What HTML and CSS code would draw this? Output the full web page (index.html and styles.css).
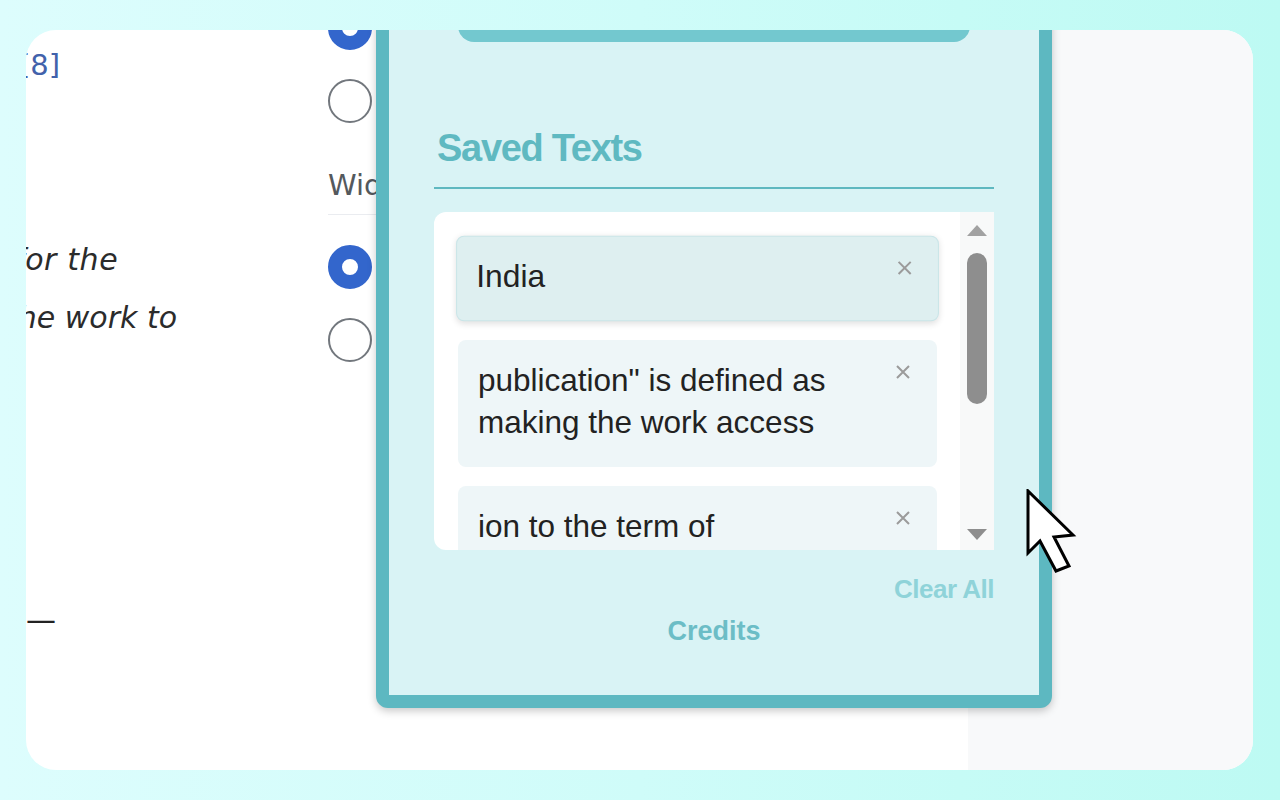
FILE: index.html
```html
<!DOCTYPE html>
<html lang="en">
<head>
<meta charset="utf-8">
<title>Saved Texts</title>
<link rel="stylesheet" href="styles.css">
</head>
<body>
<div class="stage">
  <div class="card">
    <div class="main">
      <div class="text-col">
        <div class="cite">[8]</div>
        <p class="quote"><span class="l1">for the</span><span class="l2">the work to</span></p>
        <div class="dash">—</div>
      </div>
      <div class="radio-col">
        <span class="radio on r1"></span>
        <span class="radio r2"></span>
        <div class="label">Width</div>
        <span class="radio on r3"></span>
        <span class="radio r4"></span>
      </div>
    </div>
    <div class="aside"></div>

    <div class="popup">
      <div class="top-btn"></div>
      <h2 class="title">Saved Texts</h2>
      <div class="list">
        <div class="items">
          <div class="item hover">
            <span class="txt">India</span>
            <svg class="x" viewBox="0 0 16 16" width="16" height="16"><path d="M2 2 L14 14 M14 2 L2 14" /></svg>
          </div>
          <div class="item">
            <span class="txt">publication" is defined as making the work access</span>
            <svg class="x" viewBox="0 0 16 16" width="16" height="16"><path d="M2 2 L14 14 M14 2 L2 14" /></svg>
          </div>
          <div class="item">
            <span class="txt">ion to the term of</span>
            <svg class="x" viewBox="0 0 16 16" width="16" height="16"><path d="M2 2 L14 14 M14 2 L2 14" /></svg>
          </div>
        </div>
        <div class="scroll">
          <span class="up"></span>
          <span class="thumb"></span>
          <span class="down"></span>
        </div>
      </div>
      <div class="clear">Clear All</div>
      <div class="credits">Credits</div>
    </div>
  </div>
</div>
<svg class="cursor" width="52" height="86" viewBox="0 0 52 86">
  <path d="M2 2 L2 64 L14 52 L30 82 L43 77 L28 48 L47 46 Z" />
</svg>
</body>
</html>
```

FILE: styles.css
```css
html, body {
  margin: 0;
  padding: 0;
}
body {
  width: 1280px;
  height: 800px;
  overflow: hidden;
  position: relative;
  background: linear-gradient(90deg, #ddfdfd 0%, #cffcf9 50%, #bdfaf3 100%);
  font-family: "Liberation Sans", Arial, sans-serif;
}
.stage {
  padding: 30px 27px 30px 26px;
}
.card {
  position: relative;
  display: flex;
  height: 740px;
  border-radius: 30px;
  overflow: hidden;
  background: #ffffff;
}
.main {
  flex: 1;
  display: flex;
  min-width: 0;
}
.aside {
  width: 285px;
  background: #f8f9fa;
}

/* background page */
.text-col {
  width: 302px;
  flex: none;
  font-family: "DejaVu Sans", sans-serif;
  color: #202122;
}
.cite {
  margin: 18px 0 0 -7px;
  font-size: 29px;
  line-height: 34px;
  color: #4262ab;
}
.quote {
  margin: 149px 0 0 0;
  font-size: 30px;
  line-height: 58px;
  font-style: italic;
  color: #2b2b2b;
}
.quote span {
  display: block;
  white-space: nowrap;
}
.l1 { margin-left: -12px; letter-spacing: 0.6px; }
.l2 { margin-left: -20px; }
.dash {
  margin: 253px 0 0 0;
  font-size: 30px;
  line-height: 40px;
  color: #222;
}

.radio-col {
  flex: 1;
  display: flex;
  flex-direction: column;
  align-items: flex-start;
}
.radio {
  display: block;
  flex: none;
  width: 44px;
  height: 44px;
  box-sizing: border-box;
  border-radius: 50%;
  border: 2px solid #72777d;
  background: #ffffff;
}
.radio.on {
  border: 14px solid #3366cc;
}
.r1 { margin-top: -24px; }
.r2 { margin-top: 29px; }
.r3 { margin-top: 30px; }
.r4 { margin-top: 29px; }
.label {
  align-self: stretch;
  margin-top: 45px;
  padding-bottom: 12px;
  border-bottom: 1px solid #eaecf0;
  font-family: "DejaVu Sans", sans-serif;
  font-size: 29px;
  line-height: 34px;
  color: #54595d;
  white-space: nowrap;
}

/* popup */
.popup {
  position: absolute;
  left: 350px;
  top: -60px;
  width: 676px;
  box-sizing: border-box;
  border: 13px solid #5db8c1;
  border-radius: 12px;
  background: #d9f3f5;
  padding: 0 45px 48px;
  box-shadow: 0 3px 8px rgba(0, 0, 0, 0.22);
}
.top-btn {
  height: 59px;
  margin: 0 24px;
  border-radius: 16px;
  background: #73c8cf;
}
.title {
  margin: 84px 0 0 0;
  padding: 0 0 17px 3px;
  border-bottom: 2px solid #5fb8c0;
  font-size: 38px;
  line-height: 44px;
  font-weight: bold;
  letter-spacing: -1.3px;
  color: #5fb9c1;
}
.list {
  margin-top: 23px;
  height: 338px;
  display: flex;
  background: #ffffff;
  border-radius: 12px 0 0 12px;
  overflow: hidden;
}
.items {
  flex: 1;
  min-width: 0;
  padding: 24px 23px 0 24px;
}
.item {
  display: flex;
  align-items: flex-start;
  padding: 19px 26px 24px 20px;
  margin-bottom: 19px;
  background: #eef6f8;
  border-radius: 8px;
  font-size: 31.5px;
  line-height: 42px;
  color: #222222;
}
.item.hover {
  padding: 18px 25px 23px 19px;
  border: 1px solid #c9e5e8;
  background: #deeff0;
  box-shadow: 0 2px 6px rgba(0, 0, 0, 0.12);
  transform: scale(1.008);
}
.txt {
  flex: 1;
  min-width: 0;
}
.x {
  flex: none;
  margin: 5px 0 0 12px;
}
.x path {
  stroke: #9b9b9b;
  stroke-width: 2;
  fill: none;
}
.scroll {
  width: 34px;
  flex: none;
  display: flex;
  flex-direction: column;
  align-items: center;
  background: #f8f9f9;
}
.up {
  margin-top: 13px;
  width: 0;
  height: 0;
  border-left: 10px solid transparent;
  border-right: 10px solid transparent;
  border-bottom: 11px solid #a2a2a2;
}
.thumb {
  margin-top: 17px;
  width: 20px;
  height: 151px;
  border-radius: 10px;
  background: #8e8e8e;
}
.down {
  margin-top: auto;
  margin-bottom: 10px;
  width: 0;
  height: 0;
  border-left: 10px solid transparent;
  border-right: 10px solid transparent;
  border-top: 11px solid #8e8e8e;
}
.clear {
  margin-top: 24px;
  text-align: right;
  font-size: 26px;
  line-height: 30px;
  font-weight: bold;
  letter-spacing: -0.5px;
  color: #8fd3d9;
}
.credits {
  margin-top: 11px;
  text-align: center;
  font-size: 27px;
  line-height: 32px;
  font-weight: bold;
  color: #6cbdc6;
}

/* mouse pointer on top of everything */
.cursor {
  position: absolute;
  left: 1026px;
  top: 489px;
}
.cursor path {
  fill: #ffffff;
  stroke: #000000;
  stroke-width: 3;
  stroke-linejoin: miter;
}
```
